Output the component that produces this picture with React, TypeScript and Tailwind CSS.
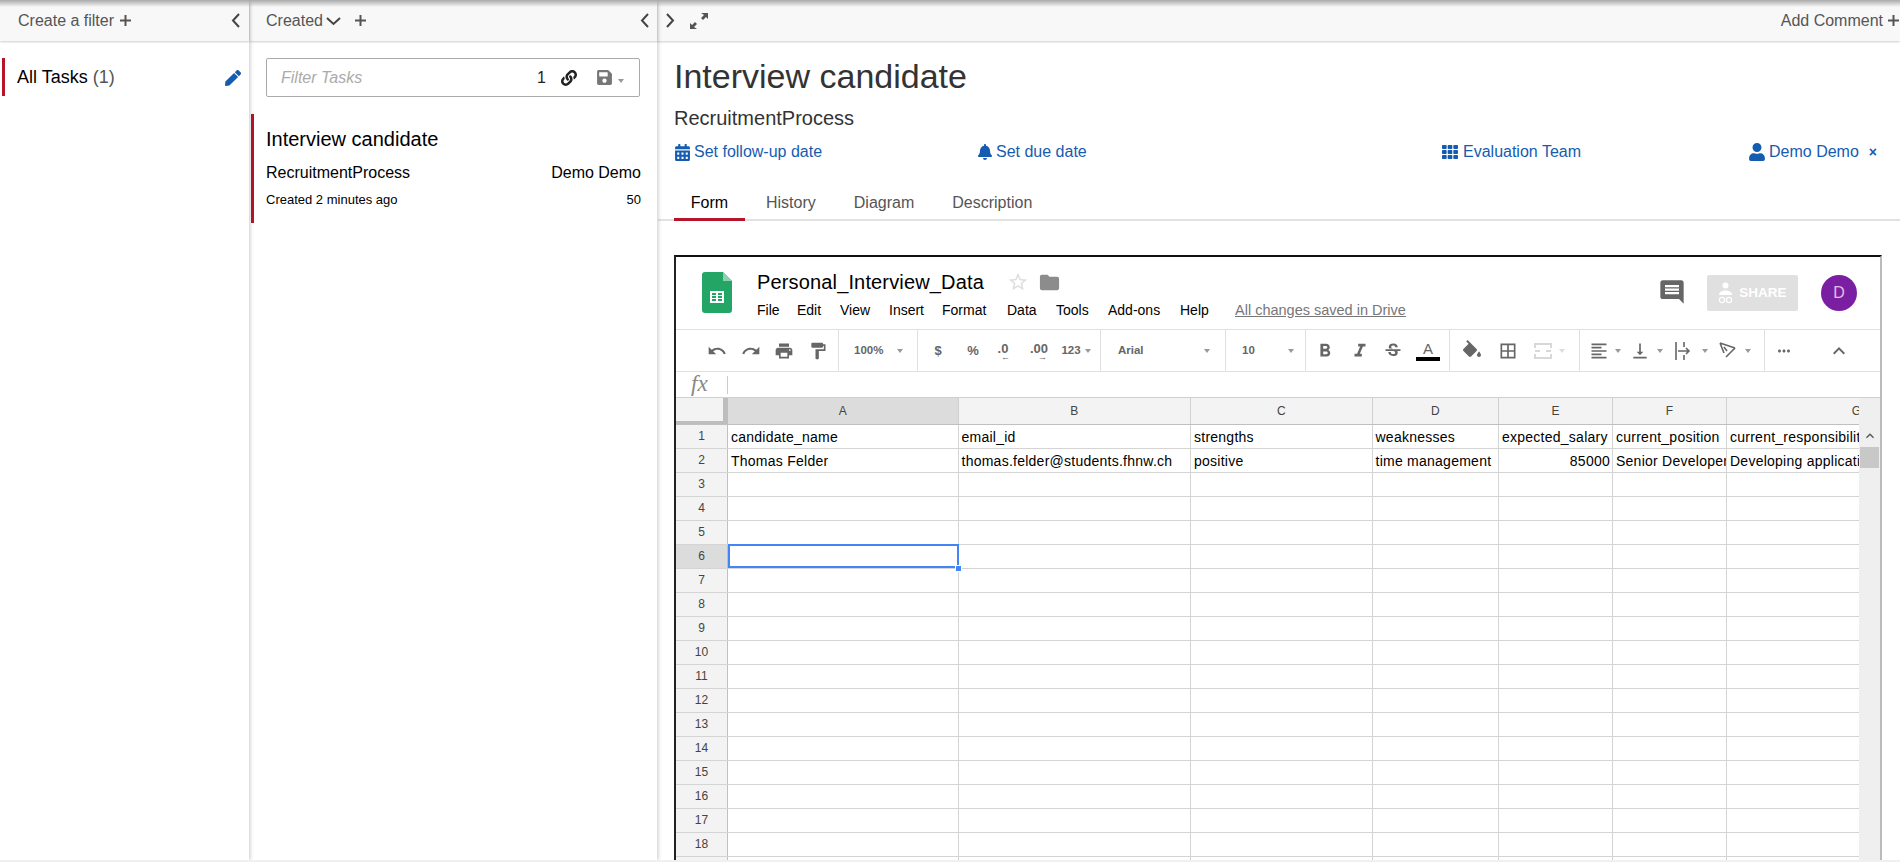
import type { ReactNode } from "react";
import {
  MdBorderAll,
  MdComment,
  MdExpandLess,
  MdFolder,
  MdFormatAlignLeft,
  MdFormatBold,
  MdFormatItalic,
  MdFormatPaint,
  MdMoreHoriz,
  MdPrint,
  MdRedo,
  MdStarBorder,
  MdStrikethroughS,
  MdUndo,
  MdVerticalAlignBottom,
} from "react-icons/md";
import { FaBell, FaCalendarAlt, FaLink, FaPen, FaSave, FaTh, FaUser } from "react-icons/fa";

const columns = ["A", "B", "C", "D", "E", "F", "G"];
const rowNumbers = Array.from({ length: 19 }, (_, i) => i + 1);
const menuItems = [
  { label: "File", cls: "w-[40px]" },
  { label: "Edit", cls: "w-[43px]" },
  { label: "View", cls: "w-[49px]" },
  { label: "Insert", cls: "w-[53px]" },
  { label: "Format", cls: "w-[65px]" },
  { label: "Data", cls: "w-[49px]" },
  { label: "Tools", cls: "w-[52px]" },
  { label: "Add-ons", cls: "w-[72px]" },
  { label: "Help", cls: "w-[55px]" },
];
const colWidths = ["w-[230.5px]", "w-[232.5px]", "w-[181.5px]", "w-[126.5px]", "w-[114px]", "w-[114px]", "w-[260px]"];
const cells: Record<number, string[]> = {
  1: ["candidate_name", "email_id", "strengths", "weaknesses", "expected_salary", "current_position", "current_responsibilities"],
  2: ["Thomas Felder", "thomas.felder@students.fhnw.ch", "positive", "time management", "85000", "Senior Developer", "Developing applications"],
};

function Chevron({ dir }: { dir: "left" | "right" | "down" }) {
  const d = dir === "left" ? "M8 1 L2 7.5 L8 14" : dir === "right" ? "M2 1 L8 7.5 L2 14" : "M1 2 L7.5 8 L14 2";
  return (
    <svg width={dir === "down" ? 15 : 10} height={dir === "down" ? 10 : 15} viewBox={dir === "down" ? "0 0 15 10" : "0 0 10 15"} fill="none" stroke="#444" strokeWidth="2">
      <path d={d} />
    </svg>
  );
}

function Plus() {
  return (
    <svg width="11" height="11" viewBox="0 0 11 11" fill="#555">
      <path d="M4.5 0h2v4.5H11v2H6.5V11h-2V6.5H0v-2h4.5z" />
    </svg>
  );
}

function Caret({ light }: { light?: boolean }) {
  return <span className={`block h-0 w-0 shrink-0 border-x-[3px] border-t-[4px] border-x-transparent ${light ? "border-t-[#ddd]" : "border-t-[#999]"}`} />;
}

function Tool({ className, children }: { className: string; children: ReactNode }) {
  return <div className={`flex shrink-0 items-center justify-center ${className}`}>{children}</div>;
}

function Toolbar() {
  return (
    <div className="flex h-[43px] shrink-0 border-y border-[#e0e0e0] text-[#666]">
      <div className="flex w-[163px] shrink-0 items-center border-r border-[#e0e0e0] pl-[24px] text-[20px]">
        <Tool className="w-[34px]"><MdUndo /></Tool>
        <Tool className="w-[33px]"><MdRedo /></Tool>
        <Tool className="w-[34px]"><MdPrint /></Tool>
        <Tool className="w-[34px]"><MdFormatPaint /></Tool>
      </div>
      <div className="flex w-[79px] shrink-0 items-center gap-[14px] border-r border-[#e0e0e0] pl-[15px] text-[11.5px] font-bold">
        <span>100%</span>
        <Caret />
      </div>
      <div className="flex w-[183px] shrink-0 items-center border-r border-[#e0e0e0] pl-[14px] text-[13px] font-bold">
        <Tool className="w-[12px]">$</Tool>
        <Tool className="ml-[22px] w-[14px]">%</Tool>
        <Tool className="relative ml-[15px] h-[26px] w-[16px] pb-[3px]">
          .0
          <span className="absolute top-[15px] left-[6px] text-[9px] leading-[9px]">←</span>
        </Tool>
        <Tool className="relative ml-[17px] h-[26px] w-[22px] pb-[3px]">
          .00
          <span className="absolute top-[15px] left-[10px] text-[9px] leading-[9px]">→</span>
        </Tool>
        <Tool className="ml-[10px] w-[22px] text-[11.5px]">123</Tool>
        <span className="ml-[3px]"><Caret /></span>
      </div>
      <div className="flex w-[125px] shrink-0 items-center justify-between border-r border-[#e0e0e0] pr-[15px] pl-[17px] text-[11.5px] font-bold">
        <span>Arial</span>
        <Caret />
      </div>
      <div className="flex w-[80px] shrink-0 items-center justify-between border-r border-[#e0e0e0] pr-[11px] pl-[16px] text-[11.5px] font-bold">
        <span>10</span>
        <Caret />
      </div>
      <div className="flex w-[144px] shrink-0 items-center border-r border-[#e0e0e0] pl-[7px] text-[20px]">
        <Tool className="w-[24px]"><MdFormatBold className="text-[22px]" /></Tool>
        <Tool className="ml-[11px] w-[24px]"><MdFormatItalic className="text-[22px]" /></Tool>
        <Tool className="ml-[9px] w-[24px]"><MdStrikethroughS /></Tool>
        <div className="ml-[11px] flex w-[24px] shrink-0 flex-col items-center">
          <span className="text-[15px] leading-[17px]">A</span>
          <span className="h-[4px] w-[24px] bg-black" />
        </div>
      </div>
      <div className="flex w-[130px] shrink-0 items-center border-r border-[#e0e0e0] pl-[11px] text-[20px]">
        <Tool className="mb-[3px] w-[22px]">
          <svg width="18" height="18" viewBox="3 0 18 18" fill="#666">
            <path d="M16.56 8.94L7.62 0 6.21 1.41l2.38 2.38-5.15 5.15c-.59.59-.59 1.54 0 2.12l5.5 5.5c.29.29.68.44 1.06.44s.77-.15 1.06-.44l5.5-5.5c.59-.58.59-1.53 0-2.11z" />
            <path d="M19 11.5s-2 2.17-2 3.5c0 1.1.9 2 2 2s2-.9 2-2c0-1.33-2-3.5-2-3.5z" />
          </svg>
        </Tool>
        <Tool className="ml-[14px] w-[22px]"><MdBorderAll /></Tool>
        <Tool className="ml-[13px] w-[22px] text-[#ddd]">
          <svg width="18" height="16" viewBox="0 0 18 16" fill="none" stroke="#d8d8d8" strokeWidth="2">
            <path d="M1 5V1h16v4M1 11v4h16v-4M1 8h5M17 8h-5" />
          </svg>
        </Tool>
        <span className="ml-[5px]"><Caret light /></span>
      </div>
      <div className="flex w-[185px] shrink-0 items-center border-r border-[#e0e0e0] pl-[9px] text-[20px]">
        <Tool className="w-[20px]"><MdFormatAlignLeft /></Tool>
        <span className="ml-[6px]"><Caret /></span>
        <Tool className="ml-[9px] w-[20px]"><MdVerticalAlignBottom /></Tool>
        <span className="ml-[7px]"><Caret /></span>
        <Tool className="ml-[10px] w-[20px]">
          <svg width="16" height="18" viewBox="0 0 16 18" fill="none" stroke="#666" strokeWidth="1.6">
            <path d="M1 0v18M9 0v5M9 13v5M3 9h11M11 6l3 3-3 3" />
          </svg>
        </Tool>
        <span className="ml-[9px]"><Caret /></span>
        <Tool className="ml-[11px] w-[20px]">
          <svg width="20" height="18" viewBox="0 0 20 18" fill="none" stroke="#666" strokeWidth="1.6">
            <path d="M1 1l15 5M1 1l4 10M7 15l9-9M5 5l3 4" />
          </svg>
        </Tool>
        <span className="ml-[6px]"><Caret /></span>
      </div>
      <Tool className="ml-[8px] w-[22px] text-[18px]"><MdMoreHoriz /></Tool>
      <Tool className="ml-[32px] w-[24px] text-[24px]"><MdExpandLess /></Tool>
    </div>
  );
}

function SheetsHeader() {
  return (
    <div className="flex h-[72px] shrink-0">
      <svg className="mt-[15px] ml-[26px] shrink-0" width="30" height="41" viewBox="0 0 30 41">
        <path d="M3 0h18l9 9v29a3 3 0 0 1-3 3H3a3 3 0 0 1-3-3V3a3 3 0 0 1 3-3z" fill="#23a566" />
        <path d="M21 0l9 9h-9z" fill="#8ed1b1" />
        <path d="M8 19h14v12H8z" fill="#fff" />
        <path d="M10 21h4v2h-4zM16 21h4v2h-4zM10 24h4v2h-4zM16 24h4v2h-4zM10 27h4v2h-4zM16 27h4v2h-4z" fill="#23a566" />
      </svg>
      <div className="ml-[25px] flex w-[681px] shrink-0 flex-col">
        <div className="mt-[12px] flex items-center">
          <span className="w-[250px] text-[20px] leading-[26px] tracking-[0.15px] text-black">Personal_Interview_Data</span>
          <MdStarBorder className="text-[22px] text-[#ddd]" />
          <MdFolder className="ml-[9px] text-[23px] text-[#8c8c8c]" />
        </div>
        <div className="mt-[6px] flex items-center text-[14px] leading-[18px] text-black">
          {menuItems.map((item) => (
            <span key={item.label} className={item.cls}>{item.label}</span>
          ))}
          <span className="text-[14.5px] text-[#777] underline">All changes saved in Drive</span>
        </div>
      </div>
      <MdComment className="mt-[21px] ml-[220px] shrink-0 text-[28px] text-[#666]" />
      <div className="mt-[18px] ml-[21px] flex h-[36px] w-[91px] shrink-0 items-center justify-center gap-[6px] rounded-[2px] bg-[#e0e0e0] text-[13.5px] font-bold text-white">
        <svg width="15" height="22" viewBox="0 0 15 22" fill="none">
          <circle cx="7.5" cy="3.5" r="3" fill="#fff" />
          <path d="M1 13c0-3 3-4.5 6.5-4.5S14 10 14 13z" fill="#fff" />
          <circle cx="4" cy="18" r="2.6" stroke="#fff" strokeWidth="1.2" />
          <circle cx="11" cy="18" r="2.6" stroke="#fff" strokeWidth="1.2" />
        </svg>
        <span>SHARE</span>
      </div>
      <div className="mt-[18px] ml-[23px] flex h-[36px] w-[36px] shrink-0 items-center justify-center rounded-full bg-[#7b1fa2] text-[16px] text-[#e1bee7]">
        D
      </div>
    </div>
  );
}

function Grid() {
  return (
    <div className="flex shrink-0">
      <div className="w-[1183px] shrink-0 overflow-hidden">
        <div className="flex h-[27px] w-[1400px] border-b border-[#c0c0c0] bg-[#f3f3f3] text-[12px] leading-[26px] text-[#444]">
          <div className="h-full w-[52px] shrink-0 border-r-[5px] border-b-[3px] border-[#bdbdbd] bg-[#f3f3f3]" />
          {columns.map((c, i) => (
            <div key={c} className={`${colWidths[i]} shrink-0 border-r border-[#d0d0d0] text-center ${c === "A" ? "bg-[#dcdcdc]" : ""}`}>
              {c}
            </div>
          ))}
        </div>
        {rowNumbers.map((n) => (
          <div key={n} className="flex h-[24px] w-[1400px] border-b border-[#d4d4d4] text-[14px] leading-[25px] tracking-[0.25px] text-black">
            <div className={`w-[52px] shrink-0 border-r border-[#c0c0c0] text-center text-[12px] leading-[23px] tracking-normal text-[#444] ${n === 6 ? "bg-[#dcdcdc]" : "bg-[#f3f3f3]"}`}>
              {n}
            </div>
            {columns.map((c, i) => (
              <div
                key={c}
                className={`relative ${colWidths[i]} shrink-0 border-r border-[#d4d4d4] pr-[2px] pl-[3px] whitespace-nowrap ${c === "E" && n === 2 ? "text-right" : ""} ${c === "A" && n === 6 ? "z-10 overflow-visible" : "overflow-hidden"}`}
              >
                {cells[n]?.[i] ?? ""}
                {c === "A" && n === 6 && (
                  <>
                    <span className="absolute -top-px -right-px -bottom-0 left-0 border-2 border-[#4285f4]" />
                    <span className="absolute -right-[4px] -bottom-[4px] h-[7px] w-[7px] border border-white bg-[#4285f4]" />
                  </>
                )}
              </div>
            ))}
          </div>
        ))}
      </div>
      <div className="relative flex w-[21px] shrink-0 flex-col items-center bg-[#efefef]">
        <MdExpandLess className="mt-[30px] text-[16px] text-[#555]" />
        <div className="mt-[3px] h-[21px] w-[19px] bg-[#c8c8c8]" />
      </div>
    </div>
  );
}

export default function App() {
  return (
    <div className="relative flex h-[862px] w-[1900px] overflow-hidden bg-white font-['Liberation_Sans',Arial,sans-serif]">
      <div className="pointer-events-none absolute inset-x-0 top-0 z-20 h-[7px] bg-gradient-to-b from-[#aaa] to-transparent" />
      <div className="pointer-events-none absolute inset-x-0 bottom-0 z-20 h-[2px] bg-[#f0f0f0]" />

      <aside className="z-10 flex h-[860px] w-[249px] shrink-0 flex-col shadow-[2px_0_3px_rgba(0,0,0,0.15)]">
        <div className="flex h-[41px] items-center bg-[#f8f8f8] pr-[8px] pl-[18px] text-[16px] text-[#555] shadow-[0_1px_2px_rgba(0,0,0,0.2)]">
          <span>Create a filter</span>
          <span className="ml-[6px]"><Plus /></span>
          <span className="ml-auto"><Chevron dir="left" /></span>
        </div>
        <div className="mt-[17px] ml-[2px] flex h-[38px] items-center border-l-[3px] border-[#b5152b] pt-[1px] pr-[8px] pl-[12px] text-[18px]">
          <span className="text-black">All Tasks</span>
          <span className="ml-[5px] text-[#555]">(1)</span>
          <FaPen className="ml-auto text-[16px] text-[#155cb0]" />
        </div>
      </aside>

      <section className="z-[5] ml-[1px] flex h-[860px] w-[407px] shrink-0 flex-col shadow-[2px_0_3px_rgba(0,0,0,0.15)]">
        <div className="flex h-[41px] items-center bg-[#f8f8f8] pr-[7px] pl-[16px] text-[16px] text-[#555] shadow-[0_1px_2px_rgba(0,0,0,0.2)]">
          <span>Created</span>
          <span className="ml-[3px]"><Chevron dir="down" /></span>
          <span className="ml-[14px]"><Plus /></span>
          <span className="ml-auto"><Chevron dir="left" /></span>
        </div>
        <div className="mt-[17px] ml-[16px] flex h-[39px] w-[374px] items-center rounded-[2px] border border-[#aaa] pr-[15px] pl-[14px] text-[16px]">
          <span className="text-[#aaa] italic">Filter Tasks</span>
          <span className="ml-auto text-[#222]">1</span>
          <FaLink className="ml-[15px] text-[16px] text-[#222]" />
          <FaSave className="ml-[19px] text-[17px] text-[#777]" />
          <span className="ml-[5px] pt-[6px]"><Caret /></span>
        </div>
        <div className="mt-[17px] ml-[1px] flex h-[109px] flex-col border-l-[3px] border-[#b5152b] pr-[16px] pl-[12px] text-black">
          <div className="mt-[11px] text-[20px] leading-[28px]">Interview candidate</div>
          <div className="mt-[10px] flex justify-between text-[16px] leading-[20px]">
            <span>RecruitmentProcess</span>
            <span>Demo Demo</span>
          </div>
          <div className="mt-[8px] flex justify-between text-[13px] leading-[18px]">
            <span>Created 2 minutes ago</span>
            <span>50</span>
          </div>
        </div>
      </section>

      <main className="flex h-[860px] min-w-0 flex-1 flex-col">
        <div className="flex h-[41px] shrink-0 items-center bg-[#f8f8f8] pl-[8px] text-[16px] text-[#555] shadow-[0_1px_2px_rgba(0,0,0,0.2)]">
          <Chevron dir="right" />
          <svg className="ml-[15px]" width="18" height="16" viewBox="0 0 18 16" fill="#555">
            <path d="M11 0h7v6l-2-2-3 3-2-2 3-3zM7 16H0v-6l2 2 3-3 2 2-3 3z" />
          </svg>
          <span className="ml-auto text-[#555]">Add Comment</span>
          <span className="mr-[1px] ml-[5px]"><Plus /></span>
        </div>
        <div className="ml-[17px] shrink-0">
          <h1 className="mt-[15px] text-[34px] leading-[40px] text-[#333]">Interview candidate</h1>
          <div className="mt-[10px] text-[20px] leading-[24px] text-[#333]">RecruitmentProcess</div>
          <div className="mt-[12px] flex h-[20px] items-center text-[16px] text-[#155cb0]">
            <div className="flex w-[303px] items-center gap-[3px]"><FaCalendarAlt className="text-[17px]" />Set follow-up date</div>
            <div className="flex w-[465px] items-center gap-[3px]"><FaBell className="text-[16px]" />Set due date</div>
            <div className="flex w-[306px] items-center gap-[5px]"><FaTh className="text-[16px]" />Evaluation Team</div>
            <div className="flex items-center gap-[3px]">
              <FaUser className="text-[18px]" />
              Demo Demo
              <span className="ml-[7px] text-[14px] font-bold">×</span>
            </div>
          </div>
        </div>
        <div className="mt-[20px] ml-[1px] flex h-[39px] shrink-0 border-b-2 border-[#e2e2e2] pl-[16px] text-[16px] text-[#555]">
          <div className="-mb-[2px] flex w-[71px] justify-center border-b-[3px] border-[#b5152b] pt-[9px] text-black">Form</div>
          <div className="ml-[21px] pt-[9px]">History</div>
          <div className="ml-[38px] pt-[9px]">Diagram</div>
          <div className="ml-[38px] pt-[9px]">Description</div>
        </div>
        <div className="mt-[34px] ml-[17px] flex min-h-0 w-[1208px] flex-1 flex-col overflow-hidden border-x-2 border-t-2 border-t-[#111] border-r-[#bbb] border-l-[#222] text-[#444]">
          <SheetsHeader />
          <Toolbar />
          <div className="flex h-[26px] shrink-0 items-center border-b border-[#d0d0d0]">
            <span className="mb-[2px] w-[51px] pl-[15px] font-['Liberation_Serif',serif] text-[23px] leading-none text-[#888] italic">fx</span>
            <span className="h-[18px] w-px bg-[#ccc]" />
          </div>
          <Grid />
        </div>
      </main>
    </div>
  );
}
